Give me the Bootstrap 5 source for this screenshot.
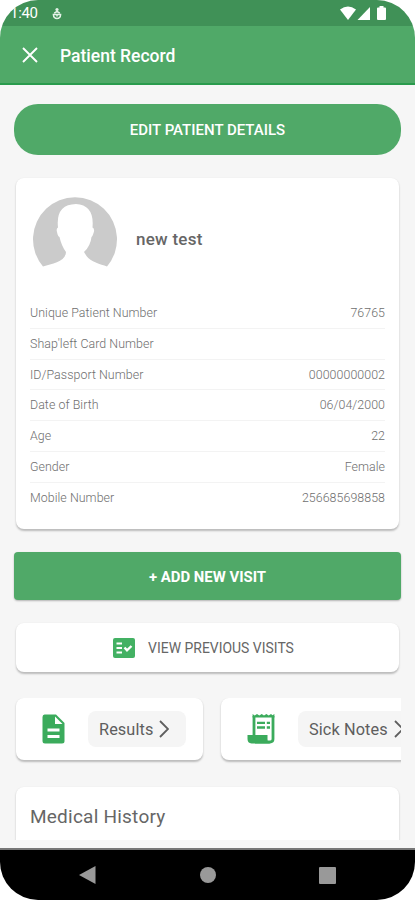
<!DOCTYPE html>
<html lang="en">
<head>
<meta charset="utf-8">
<meta name="viewport" content="width=device-width, initial-scale=1">
<title>Patient Record</title>
<link href="https://cdn.jsdelivr.net/npm/bootstrap@5.3.0/dist/css/bootstrap.min.css" rel="stylesheet">
<style>
body{font-family:Roboto,"Liberation Sans",sans-serif;background:#fff;color:#666}
.phone{width:415px;height:900px;background:#f6f6f6;border-radius:38px}
svg{display:block;flex:none}
.status{height:26px;background:#409157;padding:1px 28px 0 10px;font-size:15px;line-height:1;letter-spacing:-.3px}
.mic{margin-left:14px}
.appbar{height:59px;background:#50a968;border-bottom:2px solid #2a9b4d;padding:1px 21px 0}
.title-text{font-size:17.5px;font-weight:500;margin-left:21px;padding-top:3px}
.content{height:755px;padding:19px 14px 0 14px}
.btn-green,.btn-green:hover{background:#50a968;color:#fff;border:0;font-weight:500;font-size:15px}
.btn-edit{height:51px;border-radius:24px;padding-top:8px}
.btn-add{height:48px;border-radius:4px;box-shadow:0 1px 2px #0004;font-weight:700;font-size:14.9px;margin-top:23px;padding-top:8px}
.panel{background:#fff;border:0;border-radius:8px;box-shadow:0 1.5px 2px #0000003d}
.record{height:351px;margin:23px 2px 0;padding:18px 14px 0 14px}
.patient-name{font-size:17px;font-weight:500;color:#666;margin-left:18px;letter-spacing:.25px}
.facts{margin-top:15px}
.fact{height:30.75px;font-size:12.4px;font-weight:300;color:#6e6e6e;border-bottom:1px solid #f3f3f3;letter-spacing:.05px;padding-top:1px}
.fact:last-child{border:0;padding-top:0}
.btn-view{height:49px;margin:23px 2px 0;font-size:13.95px;color:#666;padding-right:8px}
.view-label{margin-left:13px;padding-top:1px}
.tiles{margin:26px 0 0 -2px;padding-left:4px;height:90px;width:389px}
.tile{height:62px;flex:none;width:187px;padding-left:22px}
.tile-next{margin-left:18px;padding-left:26px}
.chip{height:36px;width:98px;border-radius:8px;background:#f5f5f5;font-size:16.3px;color:#5e5e5e;padding:0 0 0 11px;letter-spacing:.1px;margin-left:20px}
.chip-label{padding-top:2px}
.tile-next .chip{width:120px;margin-left:21px}
.chevron{margin-left:6px}
.history{height:80px;margin:-1px 2px 0;padding:16px 14px;font-size:19px;border-radius:8px 8px 0 0;letter-spacing:.23px}
.bottom-gap{height:10px;border-bottom:2px solid #777}
.navkeys{height:50px;background:#000;padding:0 79px}
</style>
</head>
<body>
<div class="phone overflow-hidden">
  <div class="status d-flex align-items-center text-white">
    <span>1:40</span>
    <svg class="mic" width="10" height="13" viewBox="0 0 10 13" fill="none" stroke="#e4f2e7" stroke-width="1.5"><circle cx="5" cy="2.5" r="1.6" fill="#e4f2e7" stroke="none"/><path d="M2.2 6.2 5 4.5l2.800 1.700M1.400 7.500h7.200C8.600 10.300 7 11.600 5 11.600S1.400 10.300 1.400 7.500Z"/><path d="M5 7.500v2"/></svg>
    <svg class="ms-auto" width="47" height="15" viewBox="0 0 47 15" fill="#fff"><path d="M0 3.500Q8 -2.500 16 3.500L8 14Z"/><path d="M30 1v13H17.500Z"/><path d="M39.500 0h4v1.500h1.500q1 0 1 1V13q0 1-1 1h-7q-1 0-1-1V2.500q0-1 1-1h1.500Z"/></svg>
  </div>
  <div class="appbar d-flex align-items-center text-white">
    <svg width="18" height="18" viewBox="0 0 18 18" fill="none" stroke="#fff" stroke-width="1.900"><path d="M2 2 16 16M16 2 2 16"/></svg>
    <span class="title-text">Patient Record</span>
  </div>
  <main class="content overflow-hidden">
    <button class="btn btn-green btn-edit w-100">EDIT PATIENT DETAILS</button>
    <section class="card panel record">
      <div class="d-flex align-items-center">
        <svg width="88" height="87" viewBox="0 0 87 87"><path d="M12.500 70.500A42 42 0 1 1 76.500 70.500C70 68 60 66 56 60L53.500 56Q60 50 61 41q1-.5 2.500-5.500 .5-3-1.500-4Q64 9 45.500 8 25 8.500 27.500 31.500q-2 1-1 4.500 .8 4.500 2.500 5Q31 50 35.500 56C35 66 22 67.500 12.500 70.500Z" fill="#cbcbcb"/></svg>
        <span class="patient-name">new test</span>
      </div>
      <div class="facts">
        <div class="fact d-flex justify-content-between align-items-center"><span>Unique Patient Number</span><span>76765</span></div>
        <div class="fact d-flex justify-content-between align-items-center"><span>Shap'left Card Number</span></div>
        <div class="fact d-flex justify-content-between align-items-center"><span>ID/Passport Number</span><span>00000000002</span></div>
        <div class="fact d-flex justify-content-between align-items-center"><span>Date of Birth</span><span>06/04/2000</span></div>
        <div class="fact d-flex justify-content-between align-items-center"><span>Age</span><span>22</span></div>
        <div class="fact d-flex justify-content-between align-items-center"><span>Gender</span><span>Female</span></div>
        <div class="fact d-flex justify-content-between align-items-center"><span>Mobile Number</span><span>256685698858</span></div>
      </div>
    </section>
    <button class="btn btn-green btn-add w-100">+ ADD NEW VISIT</button>
    <div class="panel btn-view d-flex align-items-center justify-content-center">
      <svg width="22" height="20" viewBox="0 0 22 20"><rect width="22" height="20" rx="2" fill="#43b163"/><path d="M3.500 5.500h5.500M3.500 10h5.500M3.500 14.500h5.500" stroke="#fff" stroke-width="2.200"/><path d="m11.500 9.500 2.500 2.800L18.500 8" fill="none" stroke="#fff" stroke-width="2.400"/></svg>
      <span class="view-label">VIEW PREVIOUS VISITS</span>
    </div>
    <div class="tiles d-flex overflow-hidden">
      <div class="panel tile d-flex align-items-center">
        <svg width="30" height="32" viewBox="0 0 30 32"><path d="M6.500 1.500H18L26.500 10V28q0 2.500-2.500 2.500H7Q4.500 30.500 4.500 28V4Q4.500 1.500 6.500 1.500Z" fill="#3bab5c"/><path d="M17 3.500v7.500h7.500Z" fill="#fff"/><path d="M9.500 17h12M9.500 23.500h12" stroke="#fff" stroke-width="2.800"/></svg>
        <span class="chip d-flex align-items-center"><span class="chip-label">Results</span><svg class="chevron" width="10" height="18" viewBox="0 0 10 18" fill="none" stroke="#5e5e5e" stroke-width="1.800"><path d="m1 1 8 8-8 8"/></svg></span>
      </div>
      <div class="panel tile tile-next d-flex align-items-center">
        <svg width="30" height="32" viewBox="0 0 30 32"><path d="M7 22V3M26 3v23q0 3-3 3h-15" fill="none" stroke="#3bab5c" stroke-width="2.800"/><path d="M5.600 4.500V1l2.100 1.500L10 1l2.300 1.500L14.700 1 17 2.500 19.400 1l2.300 1.500L24 1l1.500 1.200L27.400 1v3.500Z" fill="#3bab5c"/><path d="M.5 22h20v4q0 4 3 4.500H4.500q-4-.5-4-4.500Z" fill="#3bab5c"/><path d="M10 9.800h8M10 14.500h8M19.800 9.800h3.200M19.800 14.500h3.200" stroke="#3bab5c" stroke-width="2.300"/></svg>
        <span class="chip d-flex align-items-center"><span class="chip-label">Sick Notes</span><svg class="chevron" width="10" height="18" viewBox="0 0 10 18" fill="none" stroke="#5e5e5e" stroke-width="1.800"><path d="m1 1 8 8-8 8"/></svg></span>
      </div>
    </div>
    <div class="panel history">Medical History</div>
  </main>
  <div class="bottom-gap"></div>
  <div class="navkeys d-flex justify-content-between align-items-center">
    <svg width="17" height="18" viewBox="0 0 17 18" fill="#999"><path d="M16.500 0v18L0 9Z"/></svg>
    <svg width="16" height="16" viewBox="0 0 16 16" fill="#999"><circle cx="8" cy="8" r="8"/></svg>
    <svg width="17" height="17" viewBox="0 0 17 17" fill="#999"><rect width="17" height="17" rx="1"/></svg>
  </div>
</div>
<script src="https://cdn.jsdelivr.net/npm/bootstrap@5.3.0/dist/js/bootstrap.bundle.min.js"></script>
</body>
</html>
